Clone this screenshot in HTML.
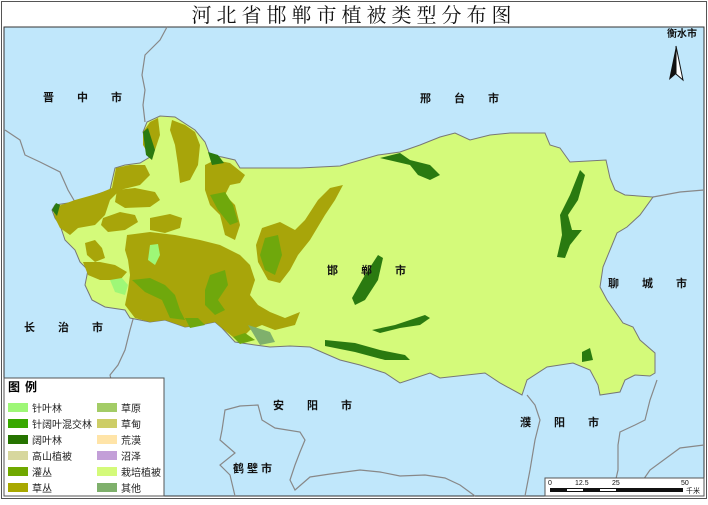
<!DOCTYPE html>
<html><head><meta charset="utf-8"><style>
body{margin:0;width:708px;height:500px;overflow:hidden;background:#fff;font-family:"Liberation Sans","Noto Sans CJK SC",sans-serif}
</style></head><body>
<svg width="708" height="500" viewBox="0 0 708 500" xmlns="http://www.w3.org/2000/svg" font-family="Liberation Sans, Noto Sans CJK SC, sans-serif">
<rect x="0" y="0" width="708" height="500" fill="#fff"/>
<rect x="1.5" y="1.5" width="705" height="497" fill="none" stroke="#555" stroke-width="1"/>
<text x="354" y="22" text-anchor="middle" font-size="20" font-family="Noto Serif CJK SC, serif" letter-spacing="5" fill="#111">河北省邯郸市植被类型分布图</text>
<rect x="4" y="27" width="700" height="469" fill="#c0e7fb" stroke="#333" stroke-width="1"/>
<g fill="none" stroke="#888" stroke-width="1.2">
<path d="M167 27 L160 40 L145 55 L142 75 L145 90 L143 105 L145 122"/>
<path d="M5 130 L20 140 L25 155 L40 162 L60 172 L68 190 L75 202"/>
<path d="M135 312 L130 330 L125 350 L118 365 L110 375 L115 395 L108 420 L110 440 L120 460 L120 496"/>
<path d="M222 430 L220 440 L235 453 L220 465 L230 475 L235 496"/>
<path d="M222 430 L225 410 L240 406 L258 405 L262 420 L275 428 L300 432 L305 440 L300 452 L295 465 L290 480 L295 490 L310 477 L330 474 L360 470 L380 472 L400 476 L425 475 L445 478 L460 485 L475 496"/>
<path d="M527 395 L535 405 L540 420 L535 440 L530 470 L525 496"/>
<path d="M657 380 L650 400 L645 420 L635 425 L620 432 L618 445 L618 470 L612 496"/>
<path d="M632 496 L650 470 L680 448 L704 445"/>
<path d="M653 197 L680 192 L704 190"/>
</g>
<!-- main region -->
<path fill="#d4fa7a" stroke="#777" stroke-width="1" d="M52 210 L55 205 L75 202 L95 195 L110 190 L115 168 L125 165 L140 163 L150 157 L143 132 L147 122 L160 116 L175 117 L195 130 L205 142 L210 155 L222 157 L235 160 L240 168 L300 168 L340 166 L378 155 L400 152 L420 145 L440 137 L455 133 L470 140 L490 135 L510 133 L545 133 L550 145 L560 148 L570 162 L606 160 L610 178 L615 190 L625 195 L653 197 L640 215 L627 227 L617 233 L603 267 L600 287 L607 300 L623 323 L633 327 L640 340 L655 353 L655 373 L650 376 L635 375 L625 380 L620 392 L600 395 L598 385 L590 370 L573 363 L547 367 L527 380 L522 395 L500 383 L485 373 L440 378 L430 373 L400 383 L385 373 L360 365 L340 360 L310 347 L290 346 L270 347 L255 345 L235 342 L222 328 L215 322 L200 325 L185 327 L165 320 L150 322 L130 318 L125 310 L105 307 L92 300 L85 285 L88 270 L80 262 L75 250 L65 240 L60 225 L55 218 Z"/>
<g fill="#a8a50a">
<!-- west lobe -->
<path d="M53 208 L75 200 L100 193 L112 188 L116 168 L130 165 L145 165 L150 175 L140 185 L120 190 L110 200 L105 215 L95 225 L78 228 L70 235 L60 228 L55 218 Z"/>
<!-- north olive left strip -->
<path d="M143 132 L150 122 L158 118 L160 135 L155 150 L150 157 L143 145 Z"/>
<!-- north central blob -->
<path d="M172 120 L185 125 L195 132 L200 145 L198 165 L190 180 L180 183 L178 165 L175 145 L170 130 Z"/>
<!-- NE blob near 210 -->
<path d="M205 165 L215 160 L230 163 L245 175 L240 183 L230 185 L225 195 L235 205 L240 225 L235 240 L225 235 L220 215 L210 205 L205 190 Z"/>
<!-- middle blobs -->
<path d="M117 190 L135 188 L155 192 L160 200 L150 207 L125 208 L115 202 Z"/>
<path d="M103 218 L120 212 L135 215 L138 222 L125 230 L108 232 L101 225 Z"/>
<path d="M150 218 L170 214 L182 218 L180 228 L165 233 L150 230 Z"/>
<path d="M85 243 L95 240 L102 248 L105 258 L95 262 L87 255 Z"/>
<path d="M83 262 L100 262 L115 265 L127 272 L120 280 L100 280 L88 275 Z"/>
<!-- big south olive -->
<path d="M127 235 L150 232 L175 235 L200 240 L220 245 L240 255 L250 265 L255 280 L250 295 L258 305 L270 312 L285 318 L300 312 L295 325 L275 330 L262 325 L250 330 L240 340 L233 337 L222 328 L215 322 L200 325 L185 327 L165 320 L150 322 L135 318 L125 305 L128 290 L130 275 L128 260 L125 250 Z"/>
<!-- east arm -->
<path d="M262 228 L280 222 L295 230 L305 220 L318 200 L330 188 L343 185 L335 200 L325 215 L310 240 L298 255 L290 270 L280 283 L268 280 L258 262 L256 245 Z"/>
</g>
<g fill="#6fa80c">
<path d="M265 238 L278 235 L282 255 L275 275 L265 270 L260 255 Z"/>
<path d="M210 195 L225 192 L233 205 L238 222 L230 225 L218 210 Z"/>
<path d="M210 275 L225 270 L228 285 L218 300 L225 310 L215 315 L205 305 L205 290 Z"/>
<path d="M132 280 L150 278 L165 285 L175 295 L180 310 L185 320 L170 318 L162 300 L145 292 Z"/>
<path d="M233 337 L245 333 L255 340 L240 344 Z"/>
<path d="M185 318 L198 318 L205 325 L190 328 Z"/>
</g>
<path fill="#9ef777" d="M110 280 L122 278 L128 285 L125 295 L115 292 Z"/>
<path fill="#9ef777" d="M150 245 L158 244 L160 255 L155 265 L148 260 Z"/>
<path fill="#7fb06c" d="M248 325 L270 332 L275 342 L260 345 Z"/>
<g fill="#2a7a10">
<path d="M143 132 L148 128 L155 150 L152 160 L146 155 Z"/>
<path d="M208 152 L218 155 L224 163 L212 165 Z"/>
<path d="M52 210 L56 203 L60 205 L57 216 Z"/>
<path d="M380 158 L400 153 L410 160 L430 165 L440 175 L430 180 L418 175 L410 165 Z"/>
<path d="M580 170 L585 175 L578 200 L568 215 L572 230 L582 230 L570 245 L565 258 L557 257 L562 235 L560 215 L570 195 Z"/>
<path d="M378 255 L383 258 L378 280 L365 300 L355 305 L352 298 L365 275 Z"/>
<path d="M372 330 L395 325 L410 320 L425 315 L430 318 L420 325 L400 328 L380 333 Z"/>
<path d="M325 340 L355 343 L380 350 L405 355 L410 360 L385 360 L355 352 L325 346 Z"/>
<path d="M582 352 L590 348 L593 360 L582 362 Z"/>
</g>
<g font-size="11" font-weight="bold" fill="#111" letter-spacing="23">
<text x="43" y="101">晋中市</text>
<text x="420" y="102">邢台市</text>
<text x="327" y="274">邯郸市</text>
<text x="608" y="287">聊城市</text>
<text x="24" y="331">长治市</text>
<text x="273" y="409">安阳市</text>
<text x="520" y="426">濮阳市</text>
<text x="233" y="472" letter-spacing="3">鹤壁市</text>
<text x="667" y="37" letter-spacing="0" font-size="10">衡水市</text>
</g>
<path d="M676 46 L669 80 L676 74 Z" fill="#111"/>
<path d="M676 46 L683 80 L676 74 Z" fill="#fff" stroke="#111" stroke-width="1"/>
<rect x="4" y="378" width="160" height="118" fill="#fff" stroke="#555"/>
<text x="8" y="391" font-size="12" font-weight="bold" letter-spacing="5">图例</text>
<g font-size="10" fill="#222">
<rect x="8" y="403" width="20" height="9" fill="#9ef777"/><text x="32" y="412">针叶林</text>
<rect x="8" y="419" width="20" height="9" fill="#38a800"/><text x="32" y="428">针阔叶混交林</text>
<rect x="8" y="435" width="20" height="9" fill="#267300"/><text x="32" y="444">阔叶林</text>
<rect x="8" y="451" width="20" height="9" fill="#d7d79e"/><text x="32" y="460">高山植被</text>
<rect x="8" y="467" width="20" height="9" fill="#70a800"/><text x="32" y="476">灌丛</text>
<rect x="8" y="483" width="20" height="9" fill="#a8a800"/><text x="32" y="492">草丛</text>
<rect x="97" y="403" width="20" height="9" fill="#a3cc66"/><text x="121" y="412">草原</text>
<rect x="97" y="419" width="20" height="9" fill="#cdcd66"/><text x="121" y="428">草甸</text>
<rect x="97" y="435" width="20" height="9" fill="#ffe4a8"/><text x="121" y="444">荒漠</text>
<rect x="97" y="451" width="20" height="9" fill="#c39fd8"/><text x="121" y="460">沼泽</text>
<rect x="97" y="467" width="20" height="9" fill="#d4fa7a"/><text x="121" y="476">栽培植被</text>
<rect x="97" y="483" width="20" height="9" fill="#7fb06c"/><text x="121" y="492">其他</text>
</g>
<rect x="545" y="478" width="159" height="18" fill="#fff" stroke="#555"/>
<g font-size="7" fill="#111"><text x="548" y="485">0</text><text x="575" y="485">12.5</text><text x="612" y="485">25</text><text x="681" y="485">50</text><text x="686" y="493">千米</text></g>
<rect x="550" y="488" width="133" height="4" fill="#111"/>
<rect x="567" y="489" width="16" height="2" fill="#fff"/><rect x="600" y="489" width="16" height="2" fill="#fff"/>
</svg>
</body></html>
